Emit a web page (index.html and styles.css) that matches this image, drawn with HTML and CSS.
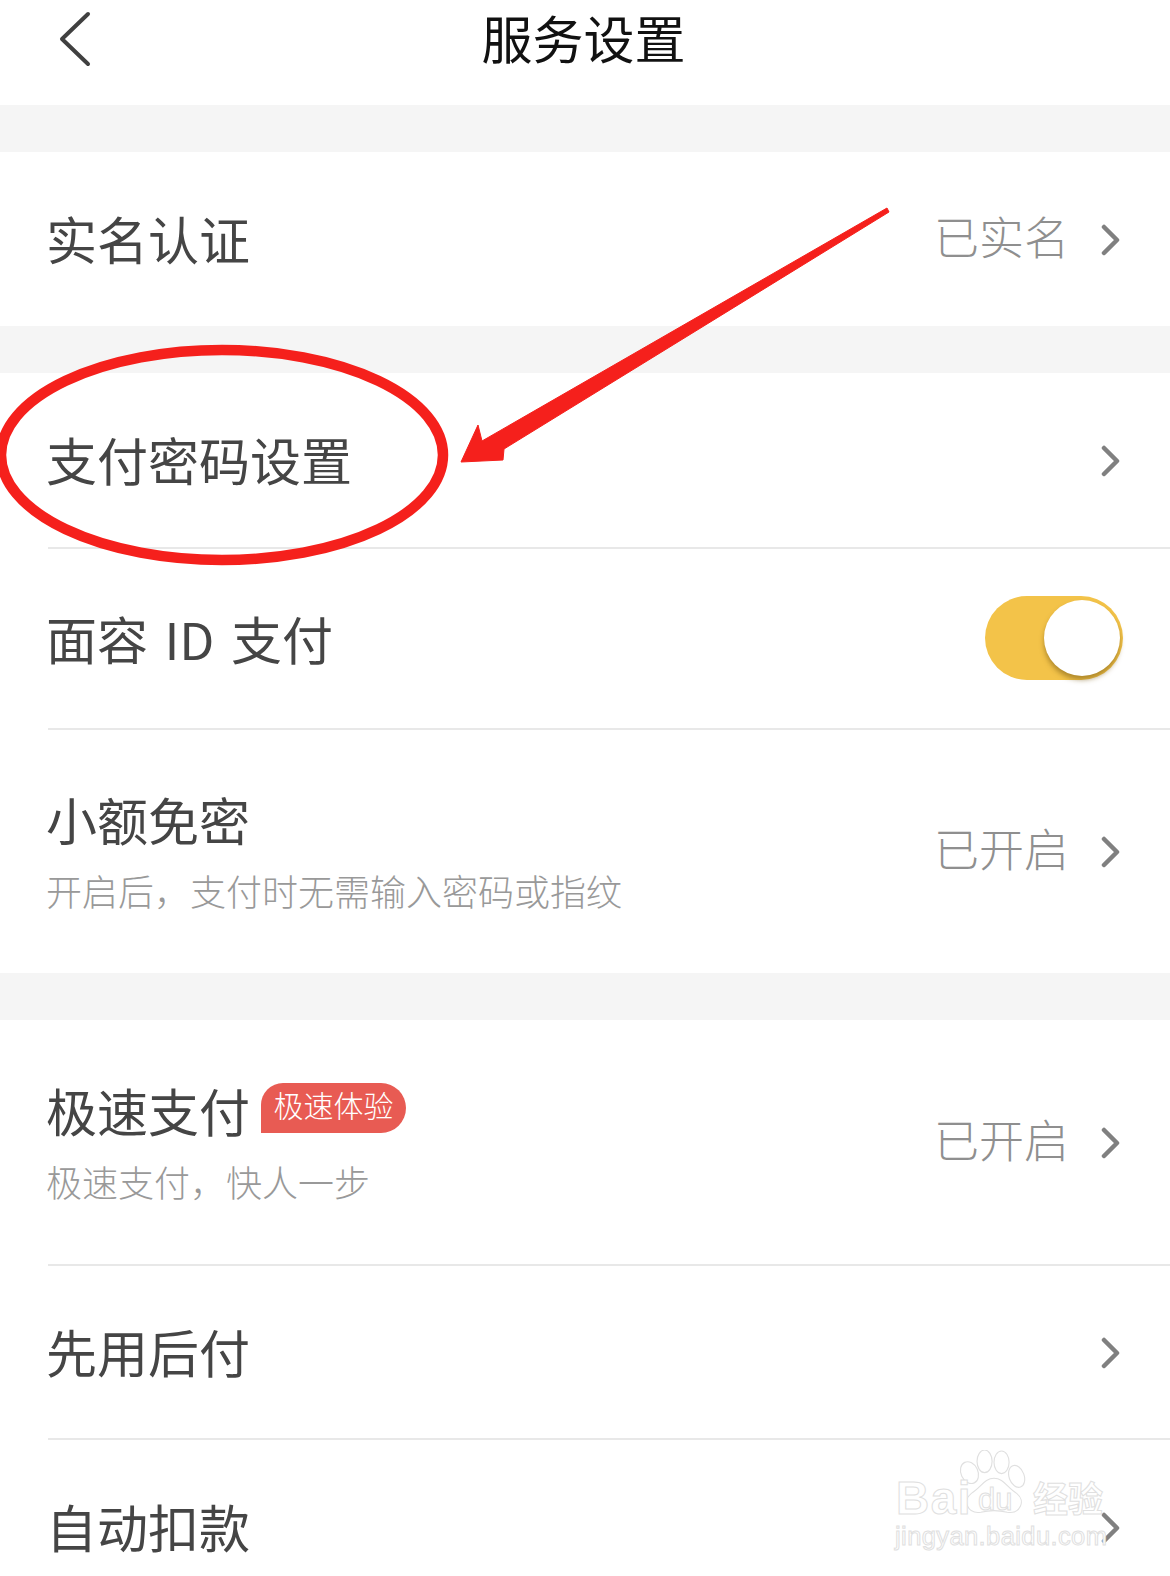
FILE: index.html
```html
<!DOCTYPE html>
<html lang="zh-CN">
<head>
<meta charset="utf-8">
<title>服务设置</title>
<link rel="stylesheet" href="styles.css">
</head>
<body>
<div class="page">
  <header class="nav">
    <svg class="back" viewBox="0 0 32 56"><path d="M29 3 3 28 29 53"/></svg>
    <h1 class="nav-title">服务设置</h1>
  </header>

  <section class="group">
    <div class="row row-174">
      <div class="row-inner">
        <div class="main"><div class="label">实名认证</div></div>
        <span class="value">已实名</span>
        <svg class="chev" viewBox="0 0 20 32"><path d="M4 3 17 16 4 29"/></svg>
      </div>
    </div>
  </section>

  <section class="group">
    <div class="row row-176">
      <div class="row-inner line">
        <div class="main"><div class="label">支付密码设置</div></div>
        <svg class="chev" viewBox="0 0 20 32"><path d="M4 3 17 16 4 29"/></svg>
      </div>
    </div>
    <div class="row row-181">
      <div class="row-inner line">
        <div class="main"><div class="label label-spaced">面容 ID 支付</div></div>
        <div class="switch"><span class="knob"></span></div>
      </div>
    </div>
    <div class="row row-243">
      <div class="row-inner">
        <div class="main main-two">
          <div class="label">小额免密</div>
          <div class="sub">开启后，支付时无需输入密码或指纹</div>
        </div>
        <span class="value">已开启</span>
        <svg class="chev" viewBox="0 0 20 32"><path d="M4 3 17 16 4 29"/></svg>
      </div>
    </div>
  </section>

  <section class="group">
    <div class="row row-246">
      <div class="row-inner line">
        <div class="main main-two">
          <div class="label-line"><span class="label">极速支付</span><span class="badge">极速体验</span></div>
          <div class="sub">极速支付，快人一步</div>
        </div>
        <span class="value">已开启</span>
        <svg class="chev" viewBox="0 0 20 32"><path d="M4 3 17 16 4 29"/></svg>
      </div>
    </div>
    <div class="row row-174">
      <div class="row-inner line">
        <div class="main"><div class="label">先用后付</div></div>
        <svg class="chev" viewBox="0 0 20 32"><path d="M4 3 17 16 4 29"/></svg>
      </div>
    </div>
    <div class="row row-last">
      <div class="row-inner">
        <div class="main"><div class="label">自动扣款</div></div>
        <svg class="chev" viewBox="0 0 20 32"><path d="M4 3 17 16 4 29"/></svg>
      </div>
    </div>
  </section>

  <svg class="annotation" viewBox="0 0 1170 1576">
    <ellipse class="ring" cx="222" cy="455" rx="221" ry="105"/>
    <path class="arrow" d="M461 462 478 425 482 441 887 208 889 212 504 449 503 460Z"/>
  </svg>

  <div class="watermark">
    <svg class="paw" viewBox="0 0 80 70">
      <ellipse cx="14" cy="24" rx="9" ry="12" transform="rotate(-25 14 24)"/>
      <ellipse cx="30" cy="12" rx="8" ry="12"/>
      <ellipse cx="48" cy="13" rx="8" ry="12"/>
      <ellipse cx="64" cy="28" rx="8" ry="12" transform="rotate(-20 64 28)"/>
      <path d="M40 30C30 30 26 40 16 46 6 54 12 68 26 66 34 64 46 64 54 66 68 68 74 54 64 46 54 40 50 30 40 30Z"/>
    </svg>
    <span class="wm-bai">Bai</span>
    <span class="wm-du">du</span>
    <span class="wm-cn">经验</span>
    <span class="wm-url">jingyan.baidu.com</span>
  </div>
</div>
</body>
</html>
```

FILE: styles.css
```css
* { box-sizing: border-box; }
html, body { margin: 0; padding: 0; background: #fff; }
.page {
  position: relative;
  width: 1170px;
  height: 1576px;
  overflow: hidden;
  font-family: "Noto Sans CJK SC", "Noto Sans", sans-serif;
  font-weight: 400;
  color: #454545;
}
.nav {
  height: 105px;
  display: flex;
  align-items: center;
  justify-content: center;
  position: relative;
  padding-bottom: 31px;
  padding-right: 3px;
}
.back {
  position: absolute;
  left: 59px;
  top: 11px;
  width: 32px;
  height: 56px;
  fill: none;
  stroke: #404040;
  stroke-width: 4;
  stroke-linecap: round;
  stroke-linejoin: round;
}
.nav-title {
  margin: 0;
  font-size: 51px;
  line-height: 60px;
  font-weight: 400;
  color: #111;
}
.group { border-top: 47px solid #f5f5f5; }
.row { padding-left: 48px; }
.row-174 { height: 174px; }
.row-176 { height: 176px; }
.row-181 { height: 181px; }
.row-243 { height: 243px; }
.row-246 { height: 246px; }
.row-last { height: 174px; }
.row-inner {
  height: 100%;
  display: flex;
  align-items: center;
  padding-right: 50px;
}
.line { border-bottom: 2px solid #e8e8e8; }
.main { flex: 1; min-width: 0; margin-left: -2px; padding-bottom: 2px; }
.main-two { padding-bottom: 2px; }
.label { font-size: 51px; line-height: 60px; }
.label-spaced { word-spacing: 5px; }
.label-line { display: flex; align-items: flex-start; }
.sub {
  font-size: 36px;
  line-height: 44px;
  font-weight: 300;
  color: #999;
  margin-top: 19px;
}
.value {
  font-size: 45px;
  line-height: 60px;
  font-weight: 300;
  color: #8f8f8f;
  margin-right: 31px;
  margin-bottom: 7px;
}
.chev {
  width: 20px;
  height: 32px;
  margin-top: 1px;
  fill: none;
  stroke: #808080;
  stroke-width: 4.5;
  stroke-linecap: round;
  stroke-linejoin: round;
}
.switch {
  position: relative;
  width: 138px;
  height: 84px;
  border-radius: 42px;
  background: #f3c349;
  margin-right: -3px;
  margin-bottom: 1px;
}
.knob {
  position: absolute;
  right: 3px;
  top: 4px;
  width: 76px;
  height: 76px;
  border-radius: 50%;
  background: #fff;
  box-shadow: 0 4px 5px rgba(120, 90, 20, .55);
}
.badge {
  margin-left: 11px;
  height: 50px;
  width: 145px;
  margin-top: 3px;
  background: #e85b53;
  color: #fff;
  font-size: 30px;
  font-weight: 300;
  line-height: 42px;
  text-align: center;
  border-radius: 22px 25px 25px 0;
}
.annotation {
  position: absolute;
  left: 0;
  top: 0;
  width: 1170px;
  height: 1576px;
  pointer-events: none;
}
.ring { fill: none; stroke: #f5201c; stroke-width: 10.5; }
.arrow { fill: #f5201c; stroke: #f5201c; stroke-width: 1; stroke-linejoin: round; }
.watermark {
  position: absolute;
  left: 895px;
  top: 1448px;
  width: 220px;
  height: 115px;
  font-family: "Liberation Sans", sans-serif;
  color: #fff;
  -webkit-text-stroke: 1px #e0e0e0;
}
.watermark span { position: absolute; white-space: nowrap; }
.paw {
  position: absolute;
  left: 58px;
  top: 2px;
  width: 82px;
  height: 66px;
  fill: #fff;
  stroke: #e0e0e0;
  stroke-width: 1.2;
}
.wm-bai { left: 1px; top: 25px; font-size: 46px; line-height: 50px; font-weight: 700; letter-spacing: 1.5px; }
.wm-du { left: 83px; top: 36px; font-size: 31px; line-height: 32px; }
.wm-cn { left: 138px; top: 27px; font-size: 35px; line-height: 44px; font-family: "Noto Sans CJK SC", sans-serif; font-weight: 700; }
.wm-url { left: 0; top: 73px; font-size: 25.5px; line-height: 30px; letter-spacing: .4px; }
```
